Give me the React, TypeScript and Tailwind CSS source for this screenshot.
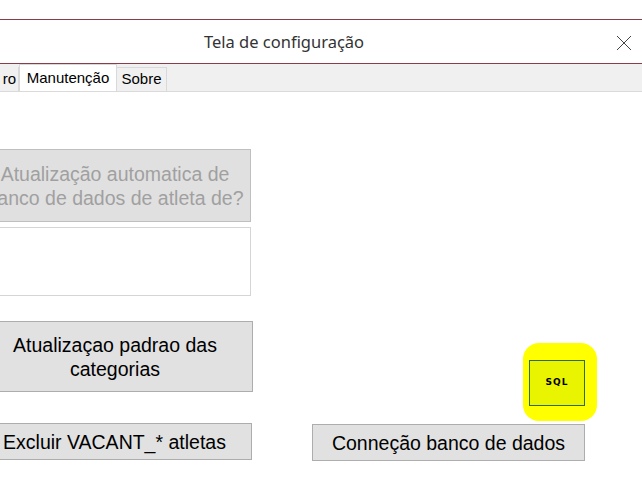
import React from "react";

const btn =
  "flex items-center justify-center text-center border text-[19.5px] leading-[24px]";

export default function App() {
  return (
    <div
      className="w-[642px] h-[490px] overflow-hidden bg-white flex flex-col"
      style={{ fontFamily: '"Liberation Sans", Arial, sans-serif' }}
    >
      {/* window top edge */}
      <div className="h-[19px] bg-white" />
      <div className="h-px bg-[#8c3b49]" />

      {/* title bar */}
      <div className="h-[43px] flex items-center relative bg-white">
        <div
          className="flex-1 text-center text-[16.5px] text-[#333333] pr-[74px] pt-px"
          style={{ fontFamily: '"Noto Sans", "Open Sans", sans-serif' }}
        >
          Tela de configuração
        </div>
        <svg
          className="absolute right-[10px] top-[15px]"
          width="16"
          height="16"
          viewBox="0 0 16 16"
        >
          <path d="M1 1 L15 15 M15 1 L1 15" stroke="#444" strokeWidth="1" fill="none" />
        </svg>
      </div>
      <div className="h-px bg-[#8c3b49]" />

      {/* tab strip */}
      <div className="h-[28px] bg-[#f0f0f0] border-b border-[#dadada] flex items-end text-[15px] text-black">
        <div className="h-[24px] w-[19px] flex items-center justify-end pr-[2px] border-r border-[#d9d9d9] overflow-hidden whitespace-nowrap">
          ro
        </div>
        <div className="h-[27px] w-[98px] bg-white border border-b-0 border-[#d9d9d9] flex items-center justify-center">
          Manutenção
        </div>
        <div className="h-[24px] w-[50px] bg-[#f0f0f0] border-r border-t border-[#d9d9d9] flex items-center justify-center">
          Sobre
        </div>
      </div>

      {/* content */}
      <div className="flex-1 flex items-start">
        <div className="-ml-[15px] w-[268px] flex flex-col pt-[57px]">
          <div className={`${btn} w-[266px] h-[73px] border-[#bfbfbf] bg-[#e0e0e0] text-[#a0a0a0] pr-[6px]`}>
            Atualização automatica de
            <br />
            banco de dados de atleta de?
          </div>
          <div className="mt-[5px] w-[266px] h-[69px] border border-[#d5d5d5] bg-white" />
          <div className={`${btn} mt-[25px] w-[268px] h-[71px] border-[#adadad] bg-[#e1e1e1] text-black pr-[8px]`}>
            Atualizaçao padrao das
            <br />
            categorias
          </div>
          <div className={`${btn} mt-[31px] w-[267px] h-[37px] border-[#adadad] bg-[#e1e1e1] text-black pr-[8px]`}>
            Excluir VACANT_* atletas
          </div>
        </div>

        <div className="ml-[59px] w-[285px] self-stretch flex flex-col justify-end pb-[29px]">
          <div className="self-end w-[74px] h-[78px] rounded-[16px] bg-[#ffff00] flex items-center justify-center">
            <div className="w-[56px] h-[46px] mt-[2px] ml-[-6px] border border-[#2f6a3a] bg-[#e9f400] flex items-center justify-center">
              <span
                className="text-[9px] font-bold text-black tracking-[1px]"
                style={{ fontFamily: '"DejaVu Sans", sans-serif' }}
              >
                SQL
              </span>
            </div>
          </div>
          <div className={`${btn} mt-[3px] w-[273px] h-[37px] border-[#adadad] bg-[#e1e1e1] text-black`}>
            Conneção banco de dados
          </div>
        </div>
      </div>
    </div>
  );
}
